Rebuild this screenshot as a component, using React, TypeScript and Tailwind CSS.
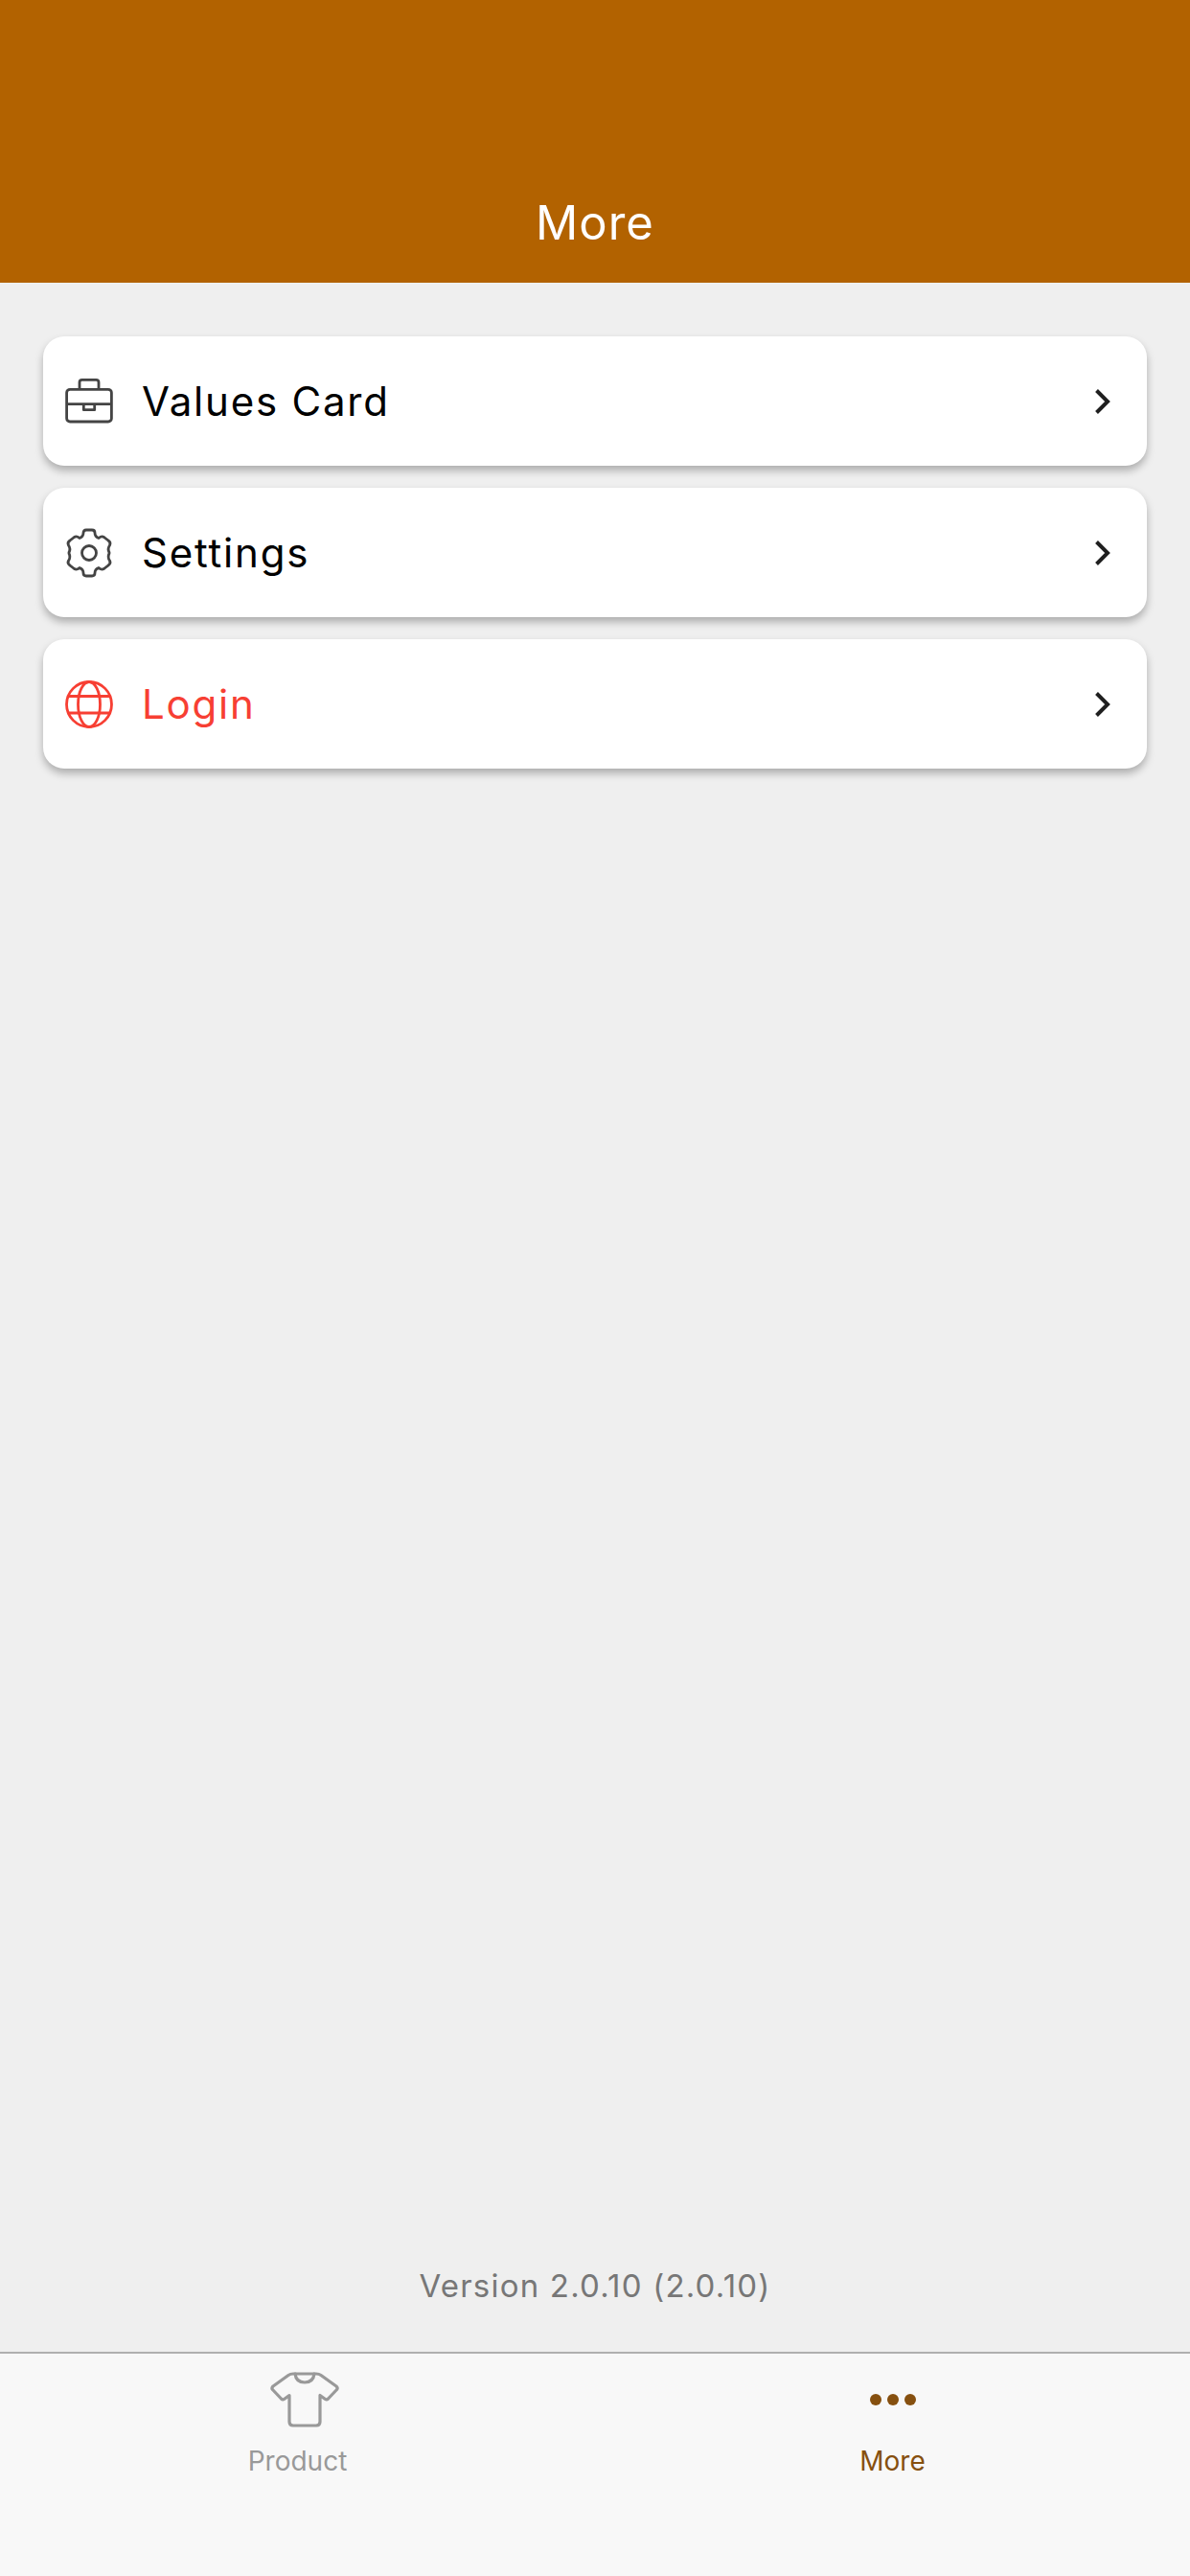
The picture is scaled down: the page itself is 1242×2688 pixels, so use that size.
import React from "react";

const font = { fontFamily: "Inter, 'Liberation Sans', sans-serif" };

function Chevron() {
  return (
    <svg width="20" height="28" viewBox="0 0 20 28" fill="none" stroke="#1f1f1f" strokeWidth="4">
      <path d="M3.5 2.5 L15 14 L3.5 25.5" />
    </svg>
  );
}

function Briefcase() {
  return (
    <svg width="52" height="50" viewBox="0 0 52 50" fill="none" stroke="#444" strokeWidth="2.8" strokeLinejoin="round">
      <rect x="2.6" y="12.300" width="46.8" height="33.700" rx="3.500" />
      <path d="M16 12.300 V5 a2.700 2.700 0 0 1 2.700-2.700 H33.300 a2.700 2.700 0 0 1 2.700 2.700 V12.300" />
      <path d="M2.600 27.700 H49.400" />
      <path d="M20.300 27.700 V33.700 H31.700 V27.700" />
    </svg>
  );
}

function Gear() {
  return (
    <svg width="50" height="52" viewBox="0 0 50 52" fill="none" stroke="#444" strokeWidth="2.8" strokeLinejoin="round">
      <path d="M19 5 Q19 2 22 2 H28 Q31 2 31 5 Q31 9 35 10.500 Q38 8 40.500 9.500 L45 13 Q48 15 46.500 18 Q44 21.500 46 25.500 Q46 26 46 26.500 Q44 30.500 46.500 34 Q48 37 45 39 L40.500 42.500 Q38 44 35 41.500 Q31 43 31 47 Q31 50 28 50 H22 Q19 50 19 47 Q19 43 15 41.500 Q12 44 9.500 42.500 L5 39 Q2 37 3.500 34 Q6 30.500 4 26.500 Q4 26 4 25.500 Q6 21.500 3.500 18 Q2 15 5 13 L9.500 9.500 Q12 8 15 10.500 Q19 9 19 5 Z" />
      <circle cx="25" cy="26" r="7.500" />
    </svg>
  );
}

function Globe() {
  return (
    <svg width="52" height="52" viewBox="0 0 52 52" fill="none" stroke="#f73f33" strokeWidth="2.8">
      <circle cx="26" cy="26" r="23.500" />
      <ellipse cx="26" cy="26" rx="11.500" ry="23.500" />
      <path d="M4.500 17.500 H47.500 M4.500 35 H47.500" />
    </svg>
  );
}

function Shirt() {
  return (
    <svg width="72" height="58" viewBox="0 0 72 58" fill="none" stroke="#999" strokeWidth="3.2" strokeLinejoin="round" strokeLinecap="round">
      <path d="M24 2 H48 Q51 2 53 3.500 L69 15 Q71 17 69.500 18.500 L60.500 28 Q59 29.500 57.500 28.500 L52 24.500 V52 Q52 56 48 56 H24 Q20 56 20 52 V24.500 L14.500 28.500 Q13 29.500 11.500 28 L2.500 18.500 Q1 17 3 15 L19 3.500 Q21 2 24 2 Z" />
      <path d="M26 2 Q27 11 36 11 Q45 11 46 2" />
    </svg>
  );
}

function Row({ icon, label, color }: { icon: React.ReactNode; label: string; color: string }) {
  return (
    <div className="flex h-[135px] items-center rounded-[22px] bg-white pl-[22px] pr-[36px] shadow-[0_5px_9px_rgba(0,0,0,0.28)]">
      <div className="flex w-[52px] justify-center">{icon}</div>
      <span className={`ml-[29px] flex-1 text-[42px] tracking-[1.8px] ${color}`}>{label}</span>
      <Chevron />
    </div>
  );
}

export default function App() {
  return (
    <div className="flex h-[2688px] w-[1242px] flex-col bg-[#efefef]" style={font}>
      <header className="flex h-[295px] items-end justify-center bg-[#b26200] pb-[32px]">
        <span className="text-[49px] leading-[60px] tracking-[1px] text-white">More</span>
      </header>
      <main className="flex flex-1 flex-col gap-[23px] px-[45px] pt-[56px]">
        <Row icon={<Briefcase />} label="Values Card" color="text-black" />
        <Row icon={<Gear />} label="Settings" color="text-black" />
        <Row icon={<Globe />} label="Login" color="text-[#f73f33]" />
        <div className="mt-auto pb-[49px] text-center text-[33px] leading-[40px] tracking-[1.2px] text-[#777777]">
          Version 2.0.10 (2.0.10)
        </div>
      </main>
      <nav className="flex h-[234px] border-t-2 border-[#b0b0b0] bg-[#f8f8f8]">
        <div className="flex w-[621px] flex-col items-center pt-[19px]">
          <div className="flex h-[58px] items-center pl-[14px]">
            <Shirt />
          </div>
          <span className="mt-[18px] text-[28px] leading-[34px] text-[#999999]">Product</span>
        </div>
        <div className="flex w-[621px] flex-col items-center pt-[19px]">
          <div className="flex h-[58px] items-center gap-[6px]">
            <div className="size-[12px] rounded-full bg-[#86500f]" />
            <div className="size-[12px] rounded-full bg-[#86500f]" />
            <div className="size-[12px] rounded-full bg-[#86500f]" />
          </div>
          <span className="mt-[18px] text-[28px] leading-[34px] text-[#86500f]">More</span>
        </div>
      </nav>
    </div>
  );
}
